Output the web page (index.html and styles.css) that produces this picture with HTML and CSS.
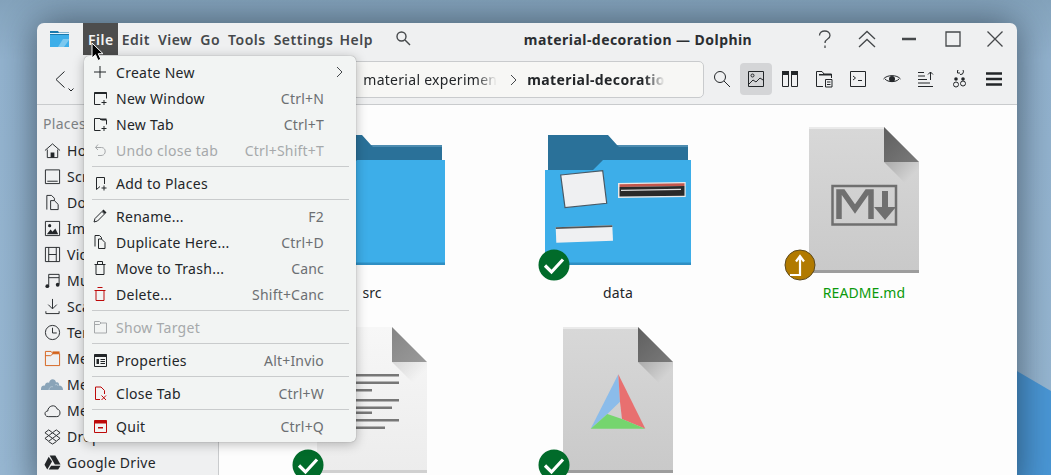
FILE: index.html
```html
<!DOCTYPE html>
<html lang="it">
<head>
<meta charset="utf-8">
<title>material-decoration — Dolphin</title>
<link rel="stylesheet" href="styles.css">
</head>
<body>
<svg class="defs" width="0" height="0" aria-hidden="true">
  <defs>
    <linearGradient id="paperGrey" x1="0" y1="0" x2="0" y2="1"><stop offset="0" stop-color="#d8d8d8"/><stop offset="1" stop-color="#c9c9c9"/></linearGradient>
    <linearGradient id="paperLight" x1="0" y1="0" x2="0" y2="1"><stop offset="0" stop-color="#f7f7f7"/><stop offset="1" stop-color="#ececec"/></linearGradient>
    <linearGradient id="foldDark" x1="0" y1="0" x2="1" y2="1"><stop offset="0" stop-color="#5f5f5f"/><stop offset="1" stop-color="#7a7a7a"/></linearGradient>
    <linearGradient id="foldLight" x1="0" y1="0" x2="1" y2="1"><stop offset="0" stop-color="#858585"/><stop offset="1" stop-color="#9a9a9a"/></linearGradient>
    <linearGradient id="foldShade" x1="0" y1="0" x2="1" y2="1"><stop offset="0" stop-color="#000" stop-opacity=".2"/><stop offset=".6" stop-color="#000" stop-opacity="0"/></linearGradient>
    <symbol id="folder" viewBox="0 0 160 160">
      <path d="M10 14H70L79 24H150V52H10Z" fill="#2a7199"/>
      <path d="M79 24H150V26H81Z" fill="#4e8db1"/>
      <path d="M7 49H55L65 39H153V144H7Z" fill="#3daee9"/>
      <path d="M7 141.500H153V144H7Z" fill="#2f8fc4"/>
    </symbol>
    <symbol id="doc" viewBox="0 0 160 160">
      <path d="M25 6H100L135 41V152H25Z" fill="url(#paperGrey)"/>
      <path d="M25 6H100L102 8H25Z" fill="#eaeaea"/>
      <path d="M25 149H135V152H25Z" fill="#9d9d9d"/>
      <path d="M100 41H135V76Z" fill="url(#foldShade)"/>
      <path d="M100 6L135 41H100Z" fill="url(#foldDark)"/>
    </symbol>
    <symbol id="docLight" viewBox="0 0 160 160">
      <path d="M25 6H100L135 41V152H25Z" fill="url(#paperLight)"/>
      <path d="M25 149H135V152H25Z" fill="#d0d0d0"/>
      <path d="M100 41H135V76Z" fill="url(#foldShade)" opacity=".6"/>
      <path d="M100 6L135 41H100Z" fill="url(#foldLight)"/>
    </symbol>
  </defs>
</svg>

<svg class="wallpaper" viewBox="0 0 1051 475" aria-hidden="true">
  <path d="M960 338L1051 391V475H960Z" fill="#4a97d6"/>
</svg>

<div class="window">
  <header class="titlebar">
    <svg class="app-logo" viewBox="0 0 20 18">
      <path d="M0 1H8L9 2.500H19V6H0Z" fill="#1b79ad"/>
      <path d="M0 5H19V17H0Z" fill="#3daee9"/>
      <path d="M0 3H19V4H0Z" fill="#e8f4fb"/>
      <path d="M8 17L13 9H19V10L14 17Z" fill="#7cc8ef"/>
    </svg>
    <nav class="menubar">
      <span class="menu-item is-open">File</span>
      <span class="menu-item">Edit</span>
      <span class="menu-item">View</span>
      <span class="menu-item">Go</span>
      <span class="menu-item">Tools</span>
      <span class="menu-item is-tight">Settings</span>
      <span class="menu-item">Help</span>
    </nav>
    <svg class="menu-search" viewBox="0 0 16 16"><circle cx="6.500" cy="6.500" r="4.500"/><path d="M10 10L15 15"/></svg>
    <div class="window-title">material-decoration — Dolphin</div>
    <div class="window-buttons">
      <span class="wbtn"><svg viewBox="0 0 22 22"><path d="M5.500 7.500C5.500 1.500 16 1.500 16 7.500C16 11.500 11 10.500 11 15"/><path d="M11 17.500V20"/></svg></span>
      <span class="wbtn"><svg viewBox="0 0 22 22"><path d="M3 11L11 3.500L19 11M3 19L11 11.500L19 19"/></svg></span>
      <span class="wbtn"><svg viewBox="0 0 22 22"><path d="M4 11H18" class="thick"/></svg></span>
      <span class="wbtn"><svg viewBox="0 0 22 22"><path d="M4 4H18V18H4Z"/></svg></span>
      <span class="wbtn"><svg viewBox="0 0 22 22"><path d="M3.500 3.500L18.500 18.500M18.500 3.500L3.500 18.500"/></svg></span>
    </div>
  </header>

  <div class="toolbar">
    <span class="back-btn">
      <svg class="back-chevron" viewBox="0 0 10 17"><path d="M9.500 .5L1 8.500L9.500 16.500"/></svg>
      <svg class="back-caret" viewBox="0 0 6 4"><path d="M.5 .5L3 3L5.500 .5"/></svg>
    </span>
    <div class="crumbs">
      <span class="crumb fade">material experimen</span>
      <svg class="crumb-sep" viewBox="0 0 7 12"><path d="M1 1L6 6L1 11"/></svg>
      <span class="crumb current fade">material-decoratio</span>
    </div>
    <div class="tools">
      <span class="tool"><svg viewBox="0 0 18 18"><circle cx="7" cy="7" r="5.500"/><path d="M11 11L17 17"/></svg></span>
      <span class="tool is-active"><svg viewBox="0 0 18 18"><path d="M1.500 1.500H16.500V16.500H1.500Z"/><circle cx="5.500" cy="5.500" r="1.500"/><path d="M2 14L6 10L9 12L13 8L16 10"/></svg></span>
      <span class="tool"><svg viewBox="0 0 18 18"><path d="M1.500 1.500H7.500V16.500H1.500ZM10.500 1.500H16.500V16.500H10.500Z"/><path d="M1 1H8V5H1ZM10 1H17V5H10Z" class="solid"/></svg></span>
      <span class="tool"><svg viewBox="0 0 18 18"><path d="M8 16.500H1.500V1.500H7L9 4H16.500V8"/><path d="M4 4H16.500V5.500H4" class="solid"/><path d="M10.500 9.500H17V17H10.500ZM12 12H15.500M12 14.500H15.500"/></svg></span>
      <span class="tool"><svg viewBox="0 0 18 18"><path d="M1.500 1.500H16.500V16.500H1.500Z"/><path d="M4 6L6.500 8L4 10M9 10.500H13"/></svg></span>
      <span class="tool"><svg viewBox="0 0 18 18"><path d="M.5 9C4 4.500 14 4.500 17.500 9M2 9C5 12.500 13 12.500 16 9"/><circle cx="9" cy="9" r="3" class="solid"/></svg></span>
      <span class="tool"><svg viewBox="0 0 18 18"><path d="M1 2.500H7M1 6H8M1 9.500H10M1 13H13M1 16.500H16M13.500 10V2M11 4.500L13.500 2L16 4.500"/></svg></span>
      <span class="tool"><svg viewBox="0 0 18 18"><path d="M9 4.500A3 3 0 1 0 6.500 1.500M6.500 .5V3H9"/><circle cx="5" cy="9" r="1.800" class="solid"/><circle cx="12" cy="9" r="1.800" class="solid"/><circle cx="5" cy="14.500" r="2.500"/><circle cx="12" cy="13.500" r="2.500"/></svg></span>
      <span class="tool"><svg viewBox="0 0 18 18"><path d="M1 3.500H17M1 9H17M1 14.500H17" class="thick"/></svg></span>
    </div>
  </div>

  <main class="main">
    <aside class="sidebar">
      <div class="side-heading">Places</div>
      <div class="place"><svg viewBox="0 0 18 18"><path d="M1 9L9 2L17 9M3.500 8V16.500H14.500V8"/><path d="M7 16.500V11H11V16.500Z" class="solid"/></svg>Home</div>
      <div class="place"><svg viewBox="0 0 18 18"><path d="M1.500 2H16.500V16.500H1.500ZM3.500 14H14.500"/></svg>Scrivania</div>
      <div class="place"><svg viewBox="0 0 18 18"><path d="M3 16.500V1.500H8L11 4.500V7M7 7H11L15 11V16.500H7Z"/></svg>Documenti</div>
      <div class="place"><svg viewBox="0 0 18 18"><path d="M1.500 1.500H16.500V16.500H1.500Z"/><circle cx="6" cy="6" r="1.700" class="solid"/><path d="M3 15L7 10L9 12.500L12 9L15 15Z" class="solid"/></svg>Immagini</div>
      <div class="place"><svg viewBox="0 0 18 18"><path d="M1.500 1.500H16.500V16.500H1.500ZM5 1.500V16.500M13 1.500V16.500M5 9H13"/></svg>Video</div>
      <div class="place"><svg viewBox="0 0 18 18"><path d="M5 15V2.500H16V13M5 6H16"/><circle cx="3.500" cy="15" r="2" class="solid"/><circle cx="14.500" cy="13.500" r="2" class="solid"/></svg>Musica</div>
      <div class="place"><svg viewBox="0 0 18 18"><path d="M9 1V11M4.500 7L9 11.500L13.500 7M2 16.500H16M2 14V16.500M16 14V16.500"/></svg>Scaricati</div>
      <div class="place"><svg viewBox="0 0 18 18"><circle cx="9" cy="9" r="7.500"/><path d="M9 4V9.500H13.500"/></svg>Temporanei</div>
      <div class="place"><svg class="orange" viewBox="0 0 18 18"><path d="M1.500 16.500V1.500H7.500L9.500 4H16.500V16.500ZM1.500 6L7 6L9.500 4"/><path d="M9 1.500H16.500V4H9Z" class="solid"/></svg>Media</div>
      <div class="place"><svg class="cloud-fill" viewBox="0 0 22 14"><path d="M0 12C0 9 2 8 4 8.500C4 6 6.500 5 8 6C8.500 1 14.500 1 15 5.500C17 4.500 18.500 6.500 18 8.500C20.500 8.500 22 10 22 13H0Z"/><path d="M8 13C8 10 11 9 12 10M14 8C15 7 17 7.500 17 9" class="cloud-lines"/></svg>Mega</div>
      <div class="place"><svg viewBox="0 0 18 18"><path d="M4.500 15.500C0 15.500 0 9.500 4 9.500C4 4 12 1.500 14 7.500C18 8 18 15.500 13.500 15.500Z"/></svg>Mega Sync</div>
      <div class="place"><svg viewBox="0 0 18 18"><path d="M5 2L9 5L5 8L1 5ZM13 2L17 5L13 8L9 5ZM5 8L9 11L5 14L1 11ZM13 8L17 11L13 14L9 11ZM5 14.500L9 17L13 14.500"/></svg>Dropbox</div>
      <div class="place"><svg viewBox="0 0 18 18"><path d="M6 1.500H12L17.500 11H11.500Z" class="solid"/><path d="M5 3L.5 11.500L3.500 16.500L8.500 8Z" class="solid"/><path d="M5 16.500H15L17.500 12.500H7.500Z" class="solid"/></svg>Google Drive</div>
    </aside>

    <section class="files">
      <figure class="file">
        <div class="thumb"><svg viewBox="0 0 160 160"><use href="#folder"/></svg></div>
        <figcaption>src</figcaption>
      </figure>
      <figure class="file">
        <div class="thumb">
          <svg viewBox="0 0 160 160">
            <use href="#folder"/>
            <path d="M22.700 54L64.700 49.700L68.700 82.300L27 86.700Z" fill="#eff0f2" stroke="#4a5a66" stroke-width="1.200"/>
            <path d="M80 62L147.700 61V76L80 77Z" fill="#e9e9e9"/>
            <path d="M81.500 63.300L146.500 62.300V65L81.500 66Z" fill="#c4574c"/>
            <path d="M81.500 66L146.500 65V74.700L81.500 75.500Z" fill="#2a2a2a"/>
            <path d="M83 68.700L143 67.800V69L83 69.900Z" fill="#ddd"/>
            <path d="M17.700 106.300L74.300 104.300L75 119.700L18.300 121.700Z" fill="#eff0f2"/>
            <path d="M17.700 106.300L74.300 104.300L74.400 106L17.800 108Z" fill="#555"/>
          </svg>
          <svg class="emblem" viewBox="0 0 32 32"><circle cx="16" cy="16" r="15.500" fill="#016b2a"/><path d="M7 16.500L13.500 23L25 10.500" class="emblem-mark"/></svg>
        </div>
        <figcaption>data</figcaption>
      </figure>
      <figure class="file">
        <div class="thumb">
          <svg viewBox="0 0 160 160">
            <use href="#doc"/>
            <path d="M48.500 65H112V103.500H48.500Z" fill="none" stroke="#6f6f6f" stroke-width="2.500"/>
            <path d="M55 98V71H59L71 88L83 71H87V98" fill="none" stroke="#6f6f6f" stroke-width="5.500"/>
            <path d="M101 70V88" fill="none" stroke="#6f6f6f" stroke-width="6"/>
            <path d="M90 86H112L101 99Z" fill="#6f6f6f"/>
          </svg>
          <svg class="emblem" viewBox="0 0 32 32"><circle cx="16" cy="16" r="15" fill="#b17a00" stroke="#5d4a1e" stroke-width="1"/><path d="M6 26H16V9M12 12.500L16 7L20 12.500" class="emblem-mark thin"/></svg>
        </div>
        <figcaption class="is-new">README.md</figcaption>
      </figure>
      <figure class="file">
        <div class="thumb">
          <svg viewBox="0 0 160 160">
            <use href="#docLight"/>
            <g fill="#777">
              <rect x="45" y="53" width="62" height="2.500"/>
              <rect x="45" y="60.500" width="62" height="2.500"/>
              <rect x="45" y="68" width="35" height="2.500"/>
              <rect x="45" y="78" width="62" height="2.500"/>
              <rect x="45" y="85.500" width="55" height="2.500"/>
              <rect x="45" y="90.500" width="35" height="2.500"/>
              <rect x="45" y="98" width="62" height="2.500"/>
              <rect x="45" y="105.500" width="48" height="2.500"/>
            </g>
          </svg>
          <svg class="emblem" viewBox="0 0 32 32"><circle cx="16" cy="16" r="15.500" fill="#016b2a"/><path d="M7 16.500L13.500 23L25 10.500" class="emblem-mark"/></svg>
        </div>
      </figure>
      <figure class="file">
        <div class="thumb">
          <svg viewBox="0 0 160 160">
            <use href="#doc"/>
            <path d="M80.300 53.300L82 80.700L69.300 93L52.700 107.700Z" fill="#8bbcea"/>
            <path d="M80.300 53.300L107.300 107.700L84 98L82 80.700Z" fill="#e87070"/>
            <path d="M52.700 107.700L69.300 93L84 98L107.300 107.700Z" fill="#75d56e"/>
          </svg>
          <svg class="emblem" viewBox="0 0 32 32"><circle cx="16" cy="16" r="15.500" fill="#016b2a"/><path d="M7 16.500L13.500 23L25 10.500" class="emblem-mark"/></svg>
        </div>
      </figure>
    </section>
  </main>
</div>

<div class="dropdown">
  <div class="row"><svg viewBox="0 0 16 16"><path d="M8 2V14M2 8H14"/></svg><span class="label">Create New</span><svg class="submenu" viewBox="0 0 7 12"><path d="M1 1L6 6L1 11"/></svg></div>
  <div class="row"><svg viewBox="0 0 16 16"><path d="M8.500 14.500H2.500V2.500H14.500V8.500"/><path d="M2.500 2.500H14.500V4H2.500Z" class="solid"/><path d="M12 10V15M9.500 12.500H14.500"/></svg><span class="label">New Window</span><span class="keys">Ctrl+N</span></div>
  <div class="row"><svg viewBox="0 0 16 16"><path d="M8.500 14.500H2.500V2.500H8L9.500 4H14.500V8.500"/><path d="M8 2.500H14.500V4H8Z" class="solid"/><path d="M12 10V15M9.500 12.500H14.500"/></svg><span class="label">New Tab</span><span class="keys">Ctrl+T</span></div>
  <div class="row is-disabled"><svg viewBox="0 0 16 16"><path d="M6 2.500L3.500 5.500L6 8M3.500 5.500H9.500C14.500 5.500 14.500 13.500 9 13.500H6"/></svg><span class="label">Undo close tab</span><span class="keys">Ctrl+Shift+T</span></div>
  <hr class="sep">
  <div class="row"><svg viewBox="0 0 16 16"><path d="M8 11.500L4.500 14.500V2.500H12.500V9"/><path d="M12 10.500V15.500M9.500 13H14.500"/></svg><span class="label">Add to Places</span></div>
  <hr class="sep">
  <div class="row"><svg viewBox="0 0 16 16"><path d="M2 14L3 10.500L10 3.500L12.500 6L5.500 13Z"/><path d="M10 3L11.500 1.500L14.500 4.500L13 6Z" class="solid"/></svg><span class="label">Rename...</span><span class="keys">F2</span></div>
  <div class="row"><svg viewBox="0 0 16 16"><path d="M3 12.500V1.500H7.500L9.500 3.500V5M6.500 5H9.500L13 8.500V14.500H6.500Z"/></svg><span class="label">Duplicate Here...</span><span class="keys">Ctrl+D</span></div>
  <div class="row"><svg viewBox="0 0 16 16"><path d="M2.500 4.500H13.500M5.500 4.500V1.500H10.500V4.500M4 4.500V14.500H12V4.500"/></svg><span class="label">Move to Trash...</span><span class="keys">Canc</span></div>
  <div class="row is-danger"><svg viewBox="0 0 16 16"><path d="M2.500 4.500H13.500M5.500 1.500H10.500M4 4.500V14.500H12V4.500"/></svg><span class="label">Delete...</span><span class="keys">Shift+Canc</span></div>
  <hr class="sep">
  <div class="row is-disabled"><svg viewBox="0 0 16 16"><path d="M2.500 14V2.500H7.500L9 4H14.500V14ZM2.500 5.500H7.500L9 4"/></svg><span class="label">Show Target</span></div>
  <hr class="sep">
  <div class="row"><svg viewBox="0 0 16 16"><path d="M2.500 2.500H14.500V14.500H2.500Z"/><path d="M2.500 2.500H14.500V5H2.500ZM4.500 7H7V12H4.500Z" class="solid"/><path d="M8.500 7.500H13M8.500 9.500H13M8.500 11.500H13"/></svg><span class="label">Properties</span><span class="keys">Alt+Invio</span></div>
  <hr class="sep">
  <div class="row is-danger"><svg viewBox="0 0 16 16"><path d="M8 14.500H3.500V2H9L12.500 5.500V9"/><path d="M9.500 10.500L14 15M14 10.500L9.500 15"/></svg><span class="label">Close Tab</span><span class="keys">Ctrl+W</span></div>
  <hr class="sep">
  <div class="row is-danger"><svg viewBox="0 0 16 16"><path d="M2.500 2.500H14.500V14.500H2.500Z"/><path d="M2.500 2.500H14.500V5.500H2.500ZM6 9H11V10.500H6Z" class="solid"/></svg><span class="label">Quit</span><span class="keys">Ctrl+Q</span></div>
</div>

<svg class="cursor" viewBox="0 0 14 20"><path d="M1 1V16L4.500 12.700L7 18.500L9.800 17.300L7.300 11.700H12Z"/></svg>
</body>
</html>
```
FILE: styles.css
```css
* { box-sizing: border-box; }
html, body { height: 100%; overflow: hidden; }
body {
  margin: 0;
  position: relative;
  background: linear-gradient(180deg, #84a3bc 0, #93b3cf 60px, #98b8d3 100%);
  font-family: "Noto Sans", sans-serif;
  font-size: 14px;
  color: #232629;
  letter-spacing: .28px;
}
.defs { position: absolute; }
svg { fill: none; stroke: currentColor; stroke-width: 1; flex: none; }
.solid { fill: currentColor; stroke: none; }
.thick { stroke-width: 2.5; }

.wallpaper { position: absolute; inset: 0; width: 100%; height: 100%; stroke: none; }

.window {
  position: absolute;
  left: 37px;
  top: 23px;
  width: 980px;
  height: 470px;
  display: flex;
  flex-direction: column;
  background: #eff0f1;
  border-radius: 7px 7px 0 0;
  box-shadow: 0 0 38px rgba(20, 30, 40, .62);
  overflow: hidden;
}

.titlebar { height: 32px; display: flex; align-items: center; flex: none; }
.app-logo { width: 20px; height: 18px; margin-left: 13px; stroke: none; }
.menubar { display: flex; margin-left: 13px; height: 32px; align-self: stretch; }
.menu-item {
  display: flex;
  align-items: center;
  padding: 0 4px;
  font-weight: 600;
  font-size: 14px;
  color: #45484b;
  letter-spacing: .5px;
}
.menu-item.is-open { background: #4d4d4d; color: #f4f4f4; padding: 0 4px 0 5px; }
.menu-item.is-tight { margin-right: -2px; }
.menu-search { width: 16px; height: 16px; margin-left: 18px; color: #45484b; margin-top: -2px; stroke-width: 1.4; }
.window-title { flex: 1; text-align: center; font-weight: 700; font-size: 14px; color: #2b2e31; padding-left: 61px; letter-spacing: .45px; }
.window-buttons { display: flex; padding-right: 1px; }
.wbtn { width: 42px; height: 32px; display: flex; align-items: center; justify-content: center; color: #45484b; }
.wbtn:nth-child(4) { margin-left: 2px; }
.wbtn svg { width: 22px; height: 22px; stroke-width: 1.3; margin-top: -1px; }

.toolbar { height: 50px; display: flex; align-items: center; flex: none; border-bottom: 1px solid #c9cbcd; padding-bottom: 1px; }
.back-btn { position: relative; width: 41px; height: 30px; margin-left: 12px; display: block; color: #232629; }
.back-chevron { position: absolute; left: 6px; top: 7px; width: 10px; height: 17px; }
.back-caret { position: absolute; left: 19px; top: 24px; width: 6px; height: 4px; }
.crumbs {
  flex: 1;
  height: 37px;
  margin-top: 1px;
  background: #f7f7f5;
  border: 1px solid #c9cbcd;
  border-radius: 5px;
  display: flex;
  align-items: center;
  justify-content: flex-end;
  padding-right: 38px;
  overflow: hidden;
}
.crumb { white-space: nowrap; }
.crumb.fade { -webkit-mask-image: linear-gradient(90deg, #000 85%, transparent 100%); mask-image: linear-gradient(90deg, #000 85%, transparent 100%); }
.crumb.current { font-weight: 700; margin-left: 10px; letter-spacing: .4px; }
.crumb-sep { width: 7px; height: 12px; margin-left: 13px; color: #45484b; }
.tools { display: flex; padding: 0 6px 0 1px; }
.tool { width: 34px; height: 32px; display: flex; align-items: center; justify-content: center; color: #232629; }
.tool svg { width: 18px; height: 18px; }
.tool.is-active { background: #d4d5d7; border-radius: 4px; width: 32px; margin: 0 1px; }

.main { flex: 1; display: flex; min-height: 0; }
.sidebar { width: 182px; flex: none; border-right: 1px solid #c9cbcd; padding: 6px 0 0 7px; }
.side-heading { height: 24px; color: #7d8184; display: flex; align-items: center; margin: 0 0 2px -1px; }
.place { height: 26px; display: flex; align-items: center; gap: 6px; white-space: nowrap; }
.place svg { width: 17px; height: 17px; }
.place .orange { color: #d4621b; }
.place .cloud-fill { fill: #8aa4b8; stroke: none; width: 22px; height: 14px; margin: 0 -2px 0 -3px; }
.place .cloud-lines { fill: none; stroke: #b3c6d4; stroke-width: 1; }

.files {
  flex: 1;
  background: #fdfdfd;
  display: grid;
  grid-template-columns: repeat(3, 246px);
  grid-auto-rows: 200px;
  padding: 16px 0 0 30px;
}
.file { margin: 0; display: flex; flex-direction: column; align-items: center; }
.thumb { position: relative; width: 160px; height: 160px; }
.thumb > svg:first-child { width: 160px; height: 160px; stroke: none; display: block; }
.emblem { position: absolute; left: 0; bottom: 0; width: 32px; height: 32px; stroke: none; }
.emblem-mark { fill: none; stroke: #fff; stroke-width: 3.2; }
.emblem-mark.thin { stroke-width: 2.2; }
.file figcaption { margin-top: 2px; height: 20px; line-height: 20px; letter-spacing: .1px; }
.file figcaption.is-new { color: #0b9a0b; }

.dropdown {
  position: absolute;
  left: 84px;
  top: 56px;
  width: 272px;
  padding: 3px 7px 3px 8px;
  background: #f2f4f3;
  border-radius: 5px;
  box-shadow: 0 0 1px rgba(0, 0, 0, .45), 0 2px 12px rgba(0, 0, 0, .28);
}
.row { height: 26px; display: flex; align-items: center; }
.row > svg:first-child { width: 16px; height: 16px; margin-right: 8px; color: #232629; }
.row .label { flex: 1; }
.row .keys { color: #6c6f72; padding-right: 25px; letter-spacing: .2px; }
.row .submenu { width: 7px; height: 12px; margin-right: 6px; color: #45484b; }
.row.is-disabled, .row.is-disabled .keys, .row.is-disabled > svg:first-child { color: #a6a9ab; }
.row.is-danger > svg:first-child { color: #bd0a0a; }
.sep { height: 1px; border: 0; background: #c9cbcc; margin: 3px 0; }

.cursor {
  position: absolute;
  left: 91px;
  top: 42px;
  width: 14px;
  height: 20px;
  fill: #000;
  stroke: #fff;
  stroke-width: 1;
}
```
